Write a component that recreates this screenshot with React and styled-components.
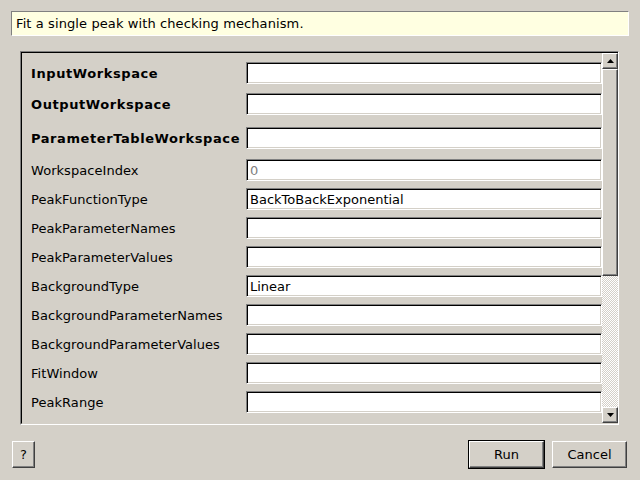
import React from 'react';
import styled, { createGlobalStyle, css } from 'styled-components';

const Global = createGlobalStyle`
  html, body { margin: 0; padding: 0; background: #d4d0c8; }
  body { width: 640px; height: 480px; overflow: hidden; font-family: "DejaVu Sans", "Liberation Sans", sans-serif; font-size: 13px; color: #000; }
  * { box-sizing: border-box; }
`;

const Window = styled.div`
  width: 640px;
  height: 480px;
  padding: 11px;
  display: flex;
  flex-direction: column;
  background: #d4d0c8;
`;

const Description = styled.div`
  height: 25px;
  background: #ffffe1;
  border: 1px solid;
  border-color: #808080 #ffffff #ffffff #808080;
  padding: 0 4px;
  display: flex;
  align-items: center;
  white-space: nowrap;
  letter-spacing: 0.1px;
`;

const Frame = styled.div`
  margin: 15px 10px 0 9px;
  height: 374px;
  border: 1px solid;
  border-color: #808080 #ffffff #ffffff #808080;
`;

const FrameInner = styled.div`
  height: 100%;
  border-style: solid;
  border-width: 1px 0 1px 1px;
  border-color: #000000 #d4d0c8 #d4d0c8 #000000;
  display: flex;
`;

const Viewport = styled.div`
  flex: 1;
  overflow: hidden;
  padding: 9px 0 0 9px;
  display: flex;
  flex-direction: column;
`;

const Row = styled.div`
  display: flex;
  align-items: center;
  height: 22px;
  margin-top: ${p => p.$gap}px;
  &:first-child { margin-top: 0; }
`;

const Label = styled.div`
  width: 215px;
  flex: none;
  white-space: nowrap;
  font-weight: ${p => (p.$bold ? 'bold' : 'normal')};
  letter-spacing: ${p => (p.$bold ? '0.58px' : '0.05px')};
`;

const Field = styled.div`
  flex: 1;
  height: 22px;
  background: #fff;
  border: 1px solid;
  border-color: #808080 #ffffff #ffffff #808080;
  box-shadow: inset 1px 1px 0 #000, inset -1px -1px 0 #d4d0c8;
  padding: 0 3px;
  display: flex;
  align-items: center;
  white-space: nowrap;
  color: ${p => (p.$muted ? '#808080' : '#000')};
`;

const raised = css`
  background: #d4d0c8;
  border: 1px solid;
  border-color: #ffffff #404040 #404040 #ffffff;
  box-shadow: inset -1px -1px 0 #808080;
`;

const ScrollBar = styled.div`
  width: 16px;
  flex: none;
  display: flex;
  flex-direction: column;
`;

const ArrowButton = styled.div`
  ${raised}
  height: 16px;
  flex: none;
  display: flex;
  align-items: center;
  justify-content: center;
`;

const Thumb = styled.div`
  ${raised}
  height: 207px;
  flex: none;
`;

const Track = styled.div`
  flex: 1;
  background: repeating-conic-gradient(#d4d0c8 0 25%, #ffffff 0 50%) 0 0 / 2px 2px;
`;

const ButtonRow = styled.div`
  margin-top: 15px;
  display: flex;
  align-items: center;
  padding: 0 2px 0 1px;
`;

const Spacer = styled.div`
  flex: 1;
`;

const PushButton = styled.button`
  ${raised}
  font: inherit;
  color: #000;
  height: 27px;
  width: ${p => p.$w}px;
  padding: 0;
  margin: 0;
`;

const DefaultFrame = styled.div`
  border: 1px solid #000;
  margin-right: 7px;
  display: flex;
`;

const Arrow = ({ up }) => (
  <svg width="7" height="4" viewBox="0 0 7 4">
    {up ? <polygon points="3.5,0 7,4 0,4" fill="#000" /> : <polygon points="0,0 7,0 3.5,4" fill="#000" />}
  </svg>
);

const rows = [
  { label: 'InputWorkspace', bold: true, gap: 0 },
  { label: 'OutputWorkspace', bold: true, gap: 9 },
  { label: 'ParameterTableWorkspace', bold: true, gap: 12 },
  { label: 'WorkspaceIndex', gap: 10, value: '0', muted: true },
  { label: 'PeakFunctionType', gap: 7, value: 'BackToBackExponential' },
  { label: 'PeakParameterNames', gap: 7 },
  { label: 'PeakParameterValues', gap: 7 },
  { label: 'BackgroundType', gap: 7, value: 'Linear' },
  { label: 'BackgroundParameterNames', gap: 7 },
  { label: 'BackgroundParameterValues', gap: 7 },
  { label: 'FitWindow', gap: 7 },
  { label: 'PeakRange', gap: 7 },
];

export default function App() {
  return (
    <>
      <Global />
      <Window>
        <Description>Fit a single peak with checking mechanism.</Description>
        <Frame>
          <FrameInner>
            <Viewport>
              {rows.map(r => (
                <Row key={r.label} $gap={r.gap}>
                  <Label $bold={r.bold}>{r.label}</Label>
                  <Field $muted={r.muted}>{r.value || ''}</Field>
                </Row>
              ))}
            </Viewport>
            <ScrollBar>
              <ArrowButton><Arrow up /></ArrowButton>
              <Thumb />
              <Track />
              <ArrowButton><Arrow /></ArrowButton>
            </ScrollBar>
          </FrameInner>
        </Frame>
        <ButtonRow>
          <PushButton $w={23}>?</PushButton>
          <Spacer />
          <DefaultFrame>
            <PushButton $w={75}>Run</PushButton>
          </DefaultFrame>
          <PushButton $w={75}>Cancel</PushButton>
        </ButtonRow>
      </Window>
    </>
  );
}
